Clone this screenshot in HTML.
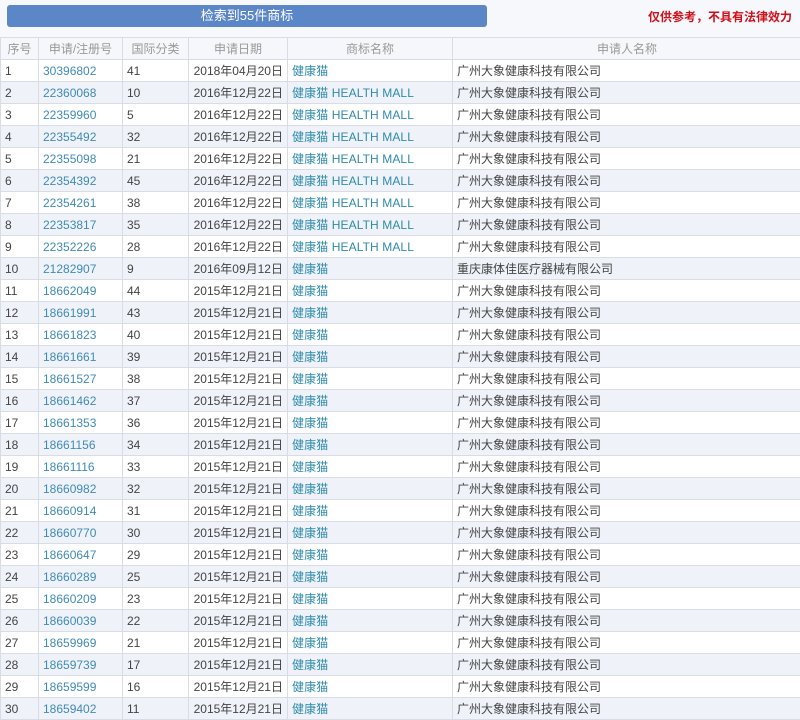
<!DOCTYPE html>
<html><head><meta charset="utf-8"><style>
body{margin:0;width:800px;height:713px;overflow:hidden;background:#fff;font-family:"Liberation Sans","Noto Sans CJK SC",sans-serif;}
.top{position:absolute;left:0;top:0;width:800px;height:37px;background:#f6f8fb;}
.btn{position:absolute;left:7px;top:5px;width:480px;height:22px;background:#5b86c8;border-radius:3px;color:#fff;font-size:13px;line-height:22px;text-align:center;}
.warn{position:absolute;right:8px;top:8px;color:#d0101a;font-size:12px;font-weight:bold;}
table{position:absolute;left:0;top:37px;border-collapse:collapse;table-layout:fixed;width:801px;font-size:12px;}
td,th{height:21px;border:1px solid #d8dde5;padding:0 0 0 4px;white-space:nowrap;overflow:hidden;color:#444;}
th{font-weight:normal;color:#999;text-align:center;background:#f5f7fa;padding:0;}
tr:nth-child(odd) td{background:#eff3f9;}
td.d{text-align:right;padding-right:4px;}
.b{color:#3f8ab8;}
.g{color:#2f8aab;letter-spacing:0.1px;}
</style></head><body>
<div class="top"></div>
<div class="btn">检索到55件商标</div>
<div class="warn">仅供参考，不具有法律效力</div>
<table>
<colgroup><col style="width:38px"><col style="width:84px"><col style="width:66px"><col style="width:99px"><col style="width:165px"><col style="width:349px"></colgroup>
<tr><th>序号</th><th>申请/注册号</th><th>国际分类</th><th>申请日期</th><th>商标名称</th><th>申请人名称</th></tr>
<tr><td>1</td><td class="b">30396802</td><td>41</td><td class="d">2018年04月20日</td><td class="g">健康猫</td><td>广州大象健康科技有限公司</td></tr>
<tr><td>2</td><td class="b">22360068</td><td>10</td><td class="d">2016年12月22日</td><td class="g">健康猫 HEALTH MALL</td><td>广州大象健康科技有限公司</td></tr>
<tr><td>3</td><td class="b">22359960</td><td>5</td><td class="d">2016年12月22日</td><td class="g">健康猫 HEALTH MALL</td><td>广州大象健康科技有限公司</td></tr>
<tr><td>4</td><td class="b">22355492</td><td>32</td><td class="d">2016年12月22日</td><td class="g">健康猫 HEALTH MALL</td><td>广州大象健康科技有限公司</td></tr>
<tr><td>5</td><td class="b">22355098</td><td>21</td><td class="d">2016年12月22日</td><td class="g">健康猫 HEALTH MALL</td><td>广州大象健康科技有限公司</td></tr>
<tr><td>6</td><td class="b">22354392</td><td>45</td><td class="d">2016年12月22日</td><td class="g">健康猫 HEALTH MALL</td><td>广州大象健康科技有限公司</td></tr>
<tr><td>7</td><td class="b">22354261</td><td>38</td><td class="d">2016年12月22日</td><td class="g">健康猫 HEALTH MALL</td><td>广州大象健康科技有限公司</td></tr>
<tr><td>8</td><td class="b">22353817</td><td>35</td><td class="d">2016年12月22日</td><td class="g">健康猫 HEALTH MALL</td><td>广州大象健康科技有限公司</td></tr>
<tr><td>9</td><td class="b">22352226</td><td>28</td><td class="d">2016年12月22日</td><td class="g">健康猫 HEALTH MALL</td><td>广州大象健康科技有限公司</td></tr>
<tr><td>10</td><td class="b">21282907</td><td>9</td><td class="d">2016年09月12日</td><td class="g">健康猫</td><td>重庆康体佳医疗器械有限公司</td></tr>
<tr><td>11</td><td class="b">18662049</td><td>44</td><td class="d">2015年12月21日</td><td class="g">健康猫</td><td>广州大象健康科技有限公司</td></tr>
<tr><td>12</td><td class="b">18661991</td><td>43</td><td class="d">2015年12月21日</td><td class="g">健康猫</td><td>广州大象健康科技有限公司</td></tr>
<tr><td>13</td><td class="b">18661823</td><td>40</td><td class="d">2015年12月21日</td><td class="g">健康猫</td><td>广州大象健康科技有限公司</td></tr>
<tr><td>14</td><td class="b">18661661</td><td>39</td><td class="d">2015年12月21日</td><td class="g">健康猫</td><td>广州大象健康科技有限公司</td></tr>
<tr><td>15</td><td class="b">18661527</td><td>38</td><td class="d">2015年12月21日</td><td class="g">健康猫</td><td>广州大象健康科技有限公司</td></tr>
<tr><td>16</td><td class="b">18661462</td><td>37</td><td class="d">2015年12月21日</td><td class="g">健康猫</td><td>广州大象健康科技有限公司</td></tr>
<tr><td>17</td><td class="b">18661353</td><td>36</td><td class="d">2015年12月21日</td><td class="g">健康猫</td><td>广州大象健康科技有限公司</td></tr>
<tr><td>18</td><td class="b">18661156</td><td>34</td><td class="d">2015年12月21日</td><td class="g">健康猫</td><td>广州大象健康科技有限公司</td></tr>
<tr><td>19</td><td class="b">18661116</td><td>33</td><td class="d">2015年12月21日</td><td class="g">健康猫</td><td>广州大象健康科技有限公司</td></tr>
<tr><td>20</td><td class="b">18660982</td><td>32</td><td class="d">2015年12月21日</td><td class="g">健康猫</td><td>广州大象健康科技有限公司</td></tr>
<tr><td>21</td><td class="b">18660914</td><td>31</td><td class="d">2015年12月21日</td><td class="g">健康猫</td><td>广州大象健康科技有限公司</td></tr>
<tr><td>22</td><td class="b">18660770</td><td>30</td><td class="d">2015年12月21日</td><td class="g">健康猫</td><td>广州大象健康科技有限公司</td></tr>
<tr><td>23</td><td class="b">18660647</td><td>29</td><td class="d">2015年12月21日</td><td class="g">健康猫</td><td>广州大象健康科技有限公司</td></tr>
<tr><td>24</td><td class="b">18660289</td><td>25</td><td class="d">2015年12月21日</td><td class="g">健康猫</td><td>广州大象健康科技有限公司</td></tr>
<tr><td>25</td><td class="b">18660209</td><td>23</td><td class="d">2015年12月21日</td><td class="g">健康猫</td><td>广州大象健康科技有限公司</td></tr>
<tr><td>26</td><td class="b">18660039</td><td>22</td><td class="d">2015年12月21日</td><td class="g">健康猫</td><td>广州大象健康科技有限公司</td></tr>
<tr><td>27</td><td class="b">18659969</td><td>21</td><td class="d">2015年12月21日</td><td class="g">健康猫</td><td>广州大象健康科技有限公司</td></tr>
<tr><td>28</td><td class="b">18659739</td><td>17</td><td class="d">2015年12月21日</td><td class="g">健康猫</td><td>广州大象健康科技有限公司</td></tr>
<tr><td>29</td><td class="b">18659599</td><td>16</td><td class="d">2015年12月21日</td><td class="g">健康猫</td><td>广州大象健康科技有限公司</td></tr>
<tr><td>30</td><td class="b">18659402</td><td>11</td><td class="d">2015年12月21日</td><td class="g">健康猫</td><td>广州大象健康科技有限公司</td></tr>
</table>
</body></html>
